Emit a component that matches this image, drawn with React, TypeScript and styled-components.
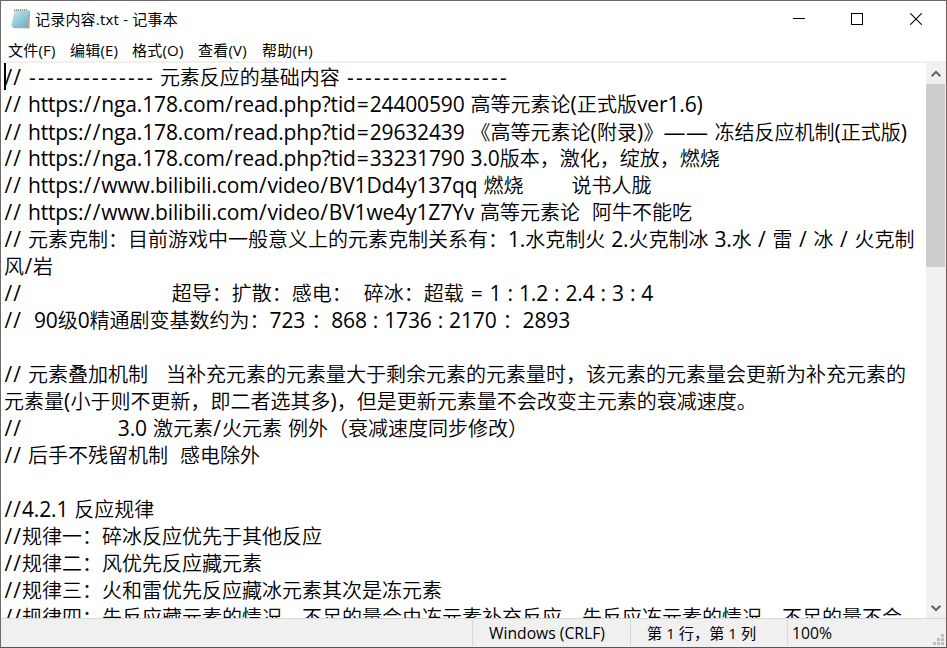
import styled, { createGlobalStyle } from 'styled-components';

const GlobalStyle = createGlobalStyle`
  * {
    box-sizing: border-box;
  }
  body {
    margin: 0;
    overflow: hidden;
  }
`;

const Window = styled.main`
  display: flex;
  flex-direction: column;
  width: 947px;
  height: 648px;
  border: 1px solid;
  border-color: #6b696b #6b5f58 #55555a #6b6b6b;
  background-color: #fff;
  color: #000;
  font-family: 'Open Sans', 'Noto Sans CJK SC', sans-serif;
  font-size: 15px;
  white-space: pre;
`;

const TitleBar = styled.header`
  display: flex;
  align-items: center;
  height: 36px;
  padding: 0 1px 0 9px;
`;

const Title = styled.h1`
  flex: 1;
  margin: -2px 0 0 4px;
  font-size: 15px;
  font-weight: 400;
  letter-spacing: 0.2px;
`;

const WindowButton = styled.button`
  display: flex;
  align-items: center;
  justify-content: center;
  width: 58.5px;
  height: 36px;
  padding: 0;
  border: 0;
  background: none;
`;

const MenuBar = styled.nav`
  display: flex;
  align-items: center;
  gap: 14px;
  height: 24px;
  padding: 0 0 0 7px;
  font-size: 15px;
  letter-spacing: 0.2px;
`;

const MenuItem = styled.span<{ $width: number }>`
  width: ${({ $width }) => $width}px;
`;

const Editor = styled.section`
  display: flex;
  height: 557px;
  border-top: 2px solid #f0f0f0;
  overflow: hidden;
`;

const Page = styled.div`
  position: relative;
  flex: 1;
  padding: 1px 0 0 3px;
  overflow: hidden;
`;

const Line = styled.p`
  height: 27px;
  margin: 0;
  font-size: 20px;
  line-height: 27px;
`;

type RunProps = {
  $size: number;
  $spacing: number;
  $shift?: number;
  $weight?: number;
};

const Run = styled.span<RunProps>`
  margin: 0 ${({ $shift = 0 }) => -$shift}px 0 ${({ $shift = 0 }) => $shift}px;
  font-size: ${({ $size }) => $size}px;
  font-weight: ${({ $weight = 400 }) => $weight};
  letter-spacing: ${({ $spacing }) => $spacing}px;
`;

// the hanzi use a slightly thinner cut than the latin text
const HanziRun = styled(Run)`
  font-family: 'Noto Sans CJK SC DemiLight', 'Noto Sans CJK SC', sans-serif;
  line-height: 20px;
`;

const Caret = styled.i`
  position: absolute;
  top: 0;
  left: 3px;
  width: 2px;
  height: 27px;
  background-color: #000;
`;

const ScrollBar = styled.aside`
  display: flex;
  flex-direction: column;
  width: 20px;
  padding-right: 1px;
  background-color: #f0f0f0;
`;

const ScrollArrow = styled.div`
  display: flex;
  align-items: center;
  justify-content: center;
  height: 21px;
`;

const ScrollTrack = styled.div`
  flex: 1;
`;

const ScrollThumb = styled.div`
  height: 183px;
  background-color: #cdcdcd;
`;

const StatusBar = styled.footer`
  display: flex;
  align-items: flex-end;
  height: 29px;
  border-top: 1px solid #d7d7d7;
  background-color: #f0f0f0;
`;

const StatusCell = styled.div<{
  $width?: number;
  $indent?: number;
  $size?: number;
}>`
  flex: ${({ $width }) => ($width ? `0 0 ${$width}px` : '1')};
  align-self: stretch;
  margin: 1px 0;
  padding-left: ${({ $indent = 0 }) => $indent}px;
  border-left: ${({ $width }) => ($width === 471 ? '0' : '1px solid #d7d7d7')};
  font-size: ${({ $size = 15.7 }) => $size}px;
  line-height: 27px;
`;

const menu = [
  { label: '文件(F)', width: 48 },
  { label: '编辑(E)', width: 48 },
  { label: '格式(O)', width: 52 },
  { label: '查看(V)', width: 50 },
  { label: '帮助(H)', width: 52 }
];

const lines = [
  '// -------------- 元素反应的基础内容 ------------------',
  '// https://nga.178.com/read.php?tid=24400590 高等元素论(正式版ver1.6)',
  '// https://nga.178.com/read.php?tid=29632439 《高等元素论(附录)》—— 冻结反应机制(正式版)',
  '// https://nga.178.com/read.php?tid=33231790 3.0版本，激化，绽放，燃烧',
  '// https://www.bilibili.com/video/BV1Dd4y137qq 燃烧        说书人胧',
  '// https://www.bilibili.com/video/BV1we4y1Z7Yv 高等元素论  阿牛不能吃',
  '// 元素克制：目前游戏中一般意义上的元素克制关系有：1.水克制火 2.火克制冰 3.水 / 雷 / 冰 / 火克制',
  '风/岩',
  '//                         超导：扩散：感电：  碎冰：超载 = 1 : 1.2 : 2.4 : 3 : 4',
  '//  90级0精通剧变基数约为：723 ：868 : 1736 : 2170 ：2893',
  '',
  '// 元素叠加机制   当补充元素的元素量大于剩余元素的元素量时，该元素的元素量会更新为补充元素的',
  '元素量(小于则不更新，即二者选其多)，但是更新元素量不会改变主元素的衰减速度。',
  '//                3.0 激元素/火元素 例外（衰减速度同步修改）',
  '// 后手不残留机制  感电除外',
  '',
  '//4.2.1 反应规律',
  '//规律一：碎冰反应优先于其他反应',
  '//规律二：风优先反应藏元素',
  '//规律三：火和雷优先反应藏冰元素其次是冻元素',
  '//规律四：先反应藏元素的情况，不足的量会由冻元素补充反应，先反应冻元素的情况，不足的量不会'
];

// latin glyphs are drawn a little larger than the hanzi next to them
const getRunStyle = (run: string): RunProps => {
  if (run[0] === '-') return { $size: 21, $spacing: 2.24, $shift: 1.2 };
  if (run[0] === '/') return { $size: 21, $spacing: 1.25, $shift: 0.4 };
  if (run[0] === '=') return { $size: 21, $spacing: 1.8, $shift: 0.9 };
  if (run[0] === ':') return { $size: 21, $spacing: -0.1 };
  if (run[0] === ' ') return { $size: 21, $spacing: 0.54 };
  if (run[0] === '(' || run[0] === ')') return { $size: 21, $spacing: 0.2 };
  if (run[0] === '—') return { $size: 22, $spacing: 0.5 };
  if (run[0] > '~') return { $size: 20, $spacing: 0, $weight: 350 };
  return { $size: 21, $spacing: -0.14 };
};

const splitRuns = (line: string) =>
  line.match(/-+|\/+| +|—+|=|:|\(|\)|[!-',.0-9;<>-~]+|[^ -~—]+/g) || [];

const isHanzi = (run: string) => run[0] > '~' && run[0] !== '—';

const NotepadIcon = () => (
  <svg width='21' height='22' viewBox='0 0 21 22'>
    <defs>
      <linearGradient id='cover' x1='0' y1='0' x2='1' y2='1'>
        <stop offset='0' stopColor='#c5e9f0' />
        <stop offset='1' stopColor='#62afc4' />
      </linearGradient>
    </defs>
    <path d='M5 3.5 20 3 19.5 20.5 3 20Z' fill='#b8a58a' />
    <path d='M4.5 2.5H19.3L17.5 19 1.2 18.5Z' fill='url(#cover)' />
    <path d='M4 1.5H19V3H4Z' fill='#d8dddd' />
    <path d='M4.5 1v2M6.5 1v2M8.5 1v2M10.5 1v2M12.5 1v2M14.5 1v2M16.5 1v2' stroke='#777' strokeWidth='.7' />
  </svg>
);

const App = () => {
  return (
    <>
      <GlobalStyle />
      <Window>
        <TitleBar>
          <NotepadIcon />
          <Title>记录内容.txt - 记事本</Title>
          <WindowButton>
            <svg width='12' height='12' shapeRendering='crispEdges'>
              <path d='M0 5.5h12' stroke='#000' />
            </svg>
          </WindowButton>
          <WindowButton>
            <svg width='12' height='12' shapeRendering='crispEdges'>
              <path d='M.5 .5h11v11h-11z' fill='none' stroke='#000' />
            </svg>
          </WindowButton>
          <WindowButton>
            <svg width='12' height='12'>
              <path d='M.3 .3 11.7 11.7M11.7 .3 .3 11.7' stroke='#000' strokeWidth='1.1' />
            </svg>
          </WindowButton>
        </TitleBar>
        <MenuBar>
          {menu.map(({ label, width }) => (
            <MenuItem key={label} $width={width}>
              {label}
            </MenuItem>
          ))}
        </MenuBar>
        <Editor>
          <Page>
            {lines.map((line, index) => (
              <Line key={index}>
                {splitRuns(line).map((run, i) => {
                  const Part = isHanzi(run) ? HanziRun : Run;
                  return (
                    <Part key={i} {...getRunStyle(run)}>
                      {run}
                    </Part>
                  );
                })}
              </Line>
            ))}
            <Caret />
          </Page>
          <ScrollBar>
            <ScrollArrow>
              <svg width='10' height='8'>
                <path d='M.7 6.2 5 1.9 9.3 6.2' fill='none' stroke='#606060' strokeWidth='2' />
              </svg>
            </ScrollArrow>
            <ScrollTrack>
              <ScrollThumb />
            </ScrollTrack>
            <ScrollArrow>
              <svg width='10' height='8'>
                <path d='M.7 1.8 5 6.1 9.3 1.8' fill='none' stroke='#606060' strokeWidth='2' />
              </svg>
            </ScrollArrow>
          </ScrollBar>
        </Editor>
        <StatusBar>
          <StatusCell $width={471} />
          <StatusCell $width={158} $indent={16}>
            Windows (CRLF)
          </StatusCell>
          <StatusCell $width={157} $indent={16} $size={15.2}>
            第 1 行，第 1 列
          </StatusCell>
          <StatusCell $indent={4}>100%</StatusCell>
          <svg width='13' height='13' fill='#bfbfbf'>
            <path d='M8 0h3v3h-3zM4 4h3v3h-3zM8 4h3v3h-3zM0 8h3v3h-3zM4 8h3v3h-3zM8 8h3v3h-3z' />
          </svg>
        </StatusBar>
      </Window>
    </>
  );
};

export default App;
